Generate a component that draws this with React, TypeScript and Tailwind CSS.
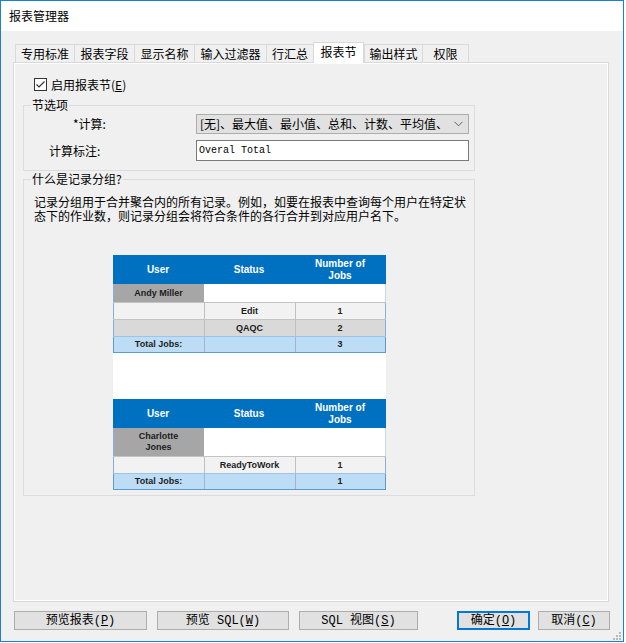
import React from 'react';

const tabs = [
  { label: '专用标准', w: 'w-[59px]' },
  { label: '报表字段', w: 'w-[60px]' },
  { label: '显示名称', w: 'w-[60px]' },
  { label: '输入过滤器', w: 'w-[72px]' },
  { label: '行汇总', w: 'w-[47px]' },
  { label: '报表节', w: 'w-[51px]', active: true },
  { label: '输出样式', w: 'w-[58px]' },
  { label: '权限', w: 'w-[47px]', last: true },
];

const cell = 'flex items-center justify-center text-center';
const bodyText = 'text-[9px] font-bold leading-[11px] text-[#1c1c1c] font-["Liberation_Sans",Arial,sans-serif]';

function Header() {
  return (
    <div className="grid h-[29px] grid-cols-3 bg-[#0070c0] font-['Liberation_Sans',Arial,sans-serif] text-[10px] font-bold leading-[12px] text-white">
      <div className={cell}>User</div>
      <div className={cell}>Status</div>
      <div className={cell}>
        Number of
        <br />
        Jobs
      </div>
    </div>
  );
}

function NameRow({ name, tall }: { name: React.ReactNode; tall?: boolean }) {
  return (
    <div className={`grid grid-cols-3 ${tall ? 'h-[28px]' : 'h-[18px]'} ${bodyText}`}>
      <div className={`${cell} border-l border-[#8eaadb] bg-[#a6a6a6]`}>{name}</div>
      <div className="col-span-2 border-r border-[#c9d7ea] bg-white" />
    </div>
  );
}

function DataRow({ bg, a, b, c }: { bg: string; a?: string; b?: string; c?: string }) {
  return (
    <div className={`grid h-[17px] grid-cols-3 border-t border-[#c4c4c4] ${bg} ${bodyText}`}>
      <div className={`${cell} border-l border-[#8eaadb]`}>{a}</div>
      <div className={`${cell} border-l border-[#bfbfbf]`}>{b}</div>
      <div className={`${cell} border-l border-r border-[#bfbfbf] border-r-[#8eaadb]`}>{c}</div>
    </div>
  );
}

function TotalRow({ n }: { n: string }) {
  return (
    <div className={`grid h-[17px] grid-cols-3 border-t border-b border-[#9dc3e6] border-b-[#5b9bd5] bg-[#bddcf6] ${bodyText}`}>
      <div className={`${cell} border-l border-[#5b9bd5]`}>Total Jobs:</div>
      <div className={`${cell} border-l border-[#9fb6cc]`} />
      <div className={`${cell} border-l border-r border-[#9fb6cc] border-r-[#5b9bd5]`}>{n}</div>
    </div>
  );
}

function Btn({ children, w, primary }: { children: React.ReactNode; w: string; primary?: boolean }) {
  return (
    <button
      className={`${w} flex h-[19px] items-center justify-center bg-[#e1e1e1] text-[12px] leading-[14px] text-black ${
        primary ? 'border-2 border-[#0078d7]' : 'border border-[#adadad]'
      }`}
    >
      {children}
    </button>
  );
}

export default function App() {
  return (
    <div className="h-[643px] w-[626px] bg-white font-['Noto_Sans_CJK_SC',sans-serif] text-[12px] text-black">
      <div className="flex h-[642px] w-[624px] flex-col border border-[#1a7fd6] bg-[#f0f0f0]">
        {/* title bar */}
        <div className="flex h-[30px] items-center bg-white pl-[8px] text-[12px] leading-[14px]">报表管理器</div>

        <div className="flex flex-1 flex-col pl-[12px] pt-[11px]">
          {/* tabs */}
          <div className="ml-[2px] flex h-[21px] items-end leading-[14px]">
            {tabs.map((t) =>
              t.active ? (
                <div
                  key={t.label}
                  className={`${t.w} relative z-10 flex h-[21px] items-center justify-center border-x border-t border-[#d9d9d9] bg-white pb-[2px]`}
                >
                  {t.label}
                </div>
              ) : (
                <div
                  key={t.label}
                  className={`${t.w} mb-px flex h-[18px] items-center justify-center border-l border-t border-[#d9d9d9] ${
                    t.last ? 'border-r' : ''
                  }`}
                >
                  {t.label}
                </div>
              )
            )}
          </div>

          {/* tab page */}
          <div className="-mt-px h-[540px] w-[596px] border border-[#d9d9d9]">
            <div className="flex h-full flex-col border border-white">
              <label className="ml-[19px] mt-[14px] flex h-[13px] items-center leading-[14px]">
                <span className="flex h-[13px] w-[13px] items-center justify-center border border-[#333333] bg-white">
                  <svg width="11" height="11" viewBox="0 0 11 11">
                    <polyline points="1.5,5.5 4,8 9.5,2.5" fill="none" stroke="#333333" strokeWidth="1.2" />
                  </svg>
                </span>
                <span className="ml-[4px]">
                  启用报表节(<span className="underline">E</span>)
                </span>
              </label>

              {/* 节选项 */}
              <fieldset className="ml-[8px] mt-[7px] h-[73px] w-[452px] border border-[#dcdcdc]">
                <legend className="ml-[7px] px-px leading-[14px]">节选项</legend>
                <div className="mt-[2px] flex h-[20px] items-center">
                  <div className="w-[172px] pl-[49px] leading-[14px]">*计算:</div>
                  <div className="flex h-[20px] w-[273px] items-center justify-between border border-[#adadad] bg-[#e1e1e1] pl-[3px] pr-[5px] leading-[14px]">
                    <span>[无]、最大值、最小值、总和、计数、平均值、</span>
                    <svg width="9" height="6" viewBox="0 0 9 6">
                      <path d="M0.5 0.8 L4.5 4.8 L8.5 0.8" fill="none" stroke="#606060" strokeWidth="1" />
                    </svg>
                  </div>
                </div>
                <div className="mt-[6px] flex h-[21px] items-center">
                  <div className="w-[172px] pl-[25px] leading-[14px]">计算标注:</div>
                  <div className="flex h-[21px] w-[273px] items-center border border-[#7a7a7a] bg-white pl-[2px] font-['Liberation_Mono',monospace] text-[10px]">
                    Overal Total
                  </div>
                </div>
              </fieldset>

              {/* 什么是记录分组? */}
              <fieldset className="ml-[8px] mt-px h-[324px] w-[452px] border border-[#dcdcdc]">
                <legend className="ml-[7px] px-px leading-[14px]">什么是记录分组?</legend>
                <p className="ml-[10px] mt-[9px] leading-[14px]">
                  记录分组用于合并聚合内的所有记录。例如，如要在报表中查询每个用户在特定状
                  <br />
                  态下的作业数，则记录分组会将符合条件的各行合并到对应用户名下。
                </p>

                <div className="mx-auto mt-[32px] flex h-[235px] w-[273px] flex-col bg-white">
                  <Header />
                  <NameRow name="Andy Miller" />
                  <DataRow bg="bg-[#f2f2f2]" b="Edit" c="1" />
                  <DataRow bg="bg-[#d9d9d9]" b="QAQC" c="2" />
                  <TotalRow n="3" />

                  <div className="h-[46px]" />

                  <Header />
                  <NameRow
                    tall
                    name={
                      <span>
                        Charlotte
                        <br />
                        Jones
                      </span>
                    }
                  />
                  <DataRow bg="bg-[#f2f2f2]" b="ReadyToWork" c="1" />
                  <TotalRow n="1" />
                </div>
              </fieldset>
            </div>
          </div>

          {/* bottom buttons */}
          <div className="mt-[9px] flex items-center font-['Liberation_Mono','Noto_Sans_CJK_SC',monospace]">
            <div className="ml-px">
              <Btn w="w-[133px]">
                预览报表(<span className="underline">P</span>)
              </Btn>
            </div>
            <div className="ml-[10px]">
              <Btn w="w-[132px]">
                预览 SQL(<span className="underline">W</span>)
              </Btn>
            </div>
            <div className="ml-[10px]">
              <Btn w="w-[119px]">
                SQL 视图(<span className="underline">S</span>)
              </Btn>
            </div>
            <div className="ml-[39px]">
              <Btn w="w-[73px]" primary>
                确定(<span className="underline">O</span>)
              </Btn>
            </div>
            <div className="ml-[8px]">
              <Btn w="w-[72px]">
                取消(<span className="underline">C</span>)
              </Btn>
            </div>
          </div>

          <div className="flex flex-1 items-end justify-end pb-[1px] pr-[2px]">
            <svg width="8" height="8" viewBox="0 0 8 8">
              <rect x="6" y="0" width="2" height="2" fill="#b8b8b8" />
              <rect x="3" y="3" width="2" height="2" fill="#b8b8b8" />
              <rect x="6" y="3" width="2" height="2" fill="#b8b8b8" />
              <rect x="0" y="6" width="2" height="2" fill="#b8b8b8" />
              <rect x="3" y="6" width="2" height="2" fill="#b8b8b8" />
              <rect x="6" y="6" width="2" height="2" fill="#b8b8b8" />
            </svg>
          </div>
        </div>
      </div>
    </div>
  );
}
